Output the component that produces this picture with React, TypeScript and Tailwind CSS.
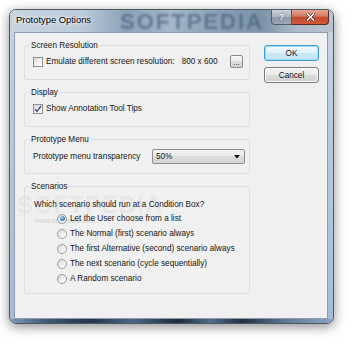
import React from "react";

function Checkbox({ checked }: { checked?: boolean }) {
  return (
    <div className="w-[10px] h-[10px] border border-[#8e8f8f] bg-[linear-gradient(135deg,#d6d6d6_0%,#f4f4f4_60%,#ffffff_100%)] flex items-center justify-center shrink-0">
      {checked && (
        <svg width="8" height="8" viewBox="0 0 8 8">
          <path d="M1 4.2 L3 6.4 L7 1" fill="none" stroke="#3a579a" strokeWidth="1.5" />
        </svg>
      )}
    </div>
  );
}

function Radio({ checked }: { checked?: boolean }) {
  return (
    <div className="w-[10px] h-[10px] rounded-full border border-[#9a9a9a] bg-[linear-gradient(135deg,#d8d8d8_0%,#f6f6f6_70%,#ffffff_100%)] flex items-center justify-center shrink-0">
      {checked && (
        <div className="w-[5px] h-[5px] rounded-full bg-[radial-gradient(circle_at_35%_35%,#a9d6f7_0%,#3b83c4_60%,#1c5a99_100%)]" />
      )}
    </div>
  );
}

function Group({
  title,
  className,
  children,
}: {
  title: string;
  className: string;
  children: React.ReactNode;
}) {
  return (
    <fieldset className={`w-[226px] border border-[#d5dfe5] rounded-[3px] ${className}`}>
      <legend className="ml-[5px] px-[1px] leading-[11px] text-[8.2px]">{title}</legend>
      {children}
    </fieldset>
  );
}

export default function App() {
  const radios = [
    "Let the User choose from a list",
    "The Normal (first) scenario always",
    "The first Alternative (second) scenario always",
    "The next scenario (cycle sequentially)",
    "A Random scenario",
  ];
  return (
    <div className="w-[350px] h-[341px] bg-white font-['Liberation_Sans',Arial,sans-serif] text-[#151515] pt-[9px] pl-[9px]">
      <div className="w-[325px] h-[315px] rounded-[7px] border border-[#4d5865] shadow-[0_3px_12px_rgba(0,0,0,0.45)] bg-[linear-gradient(180deg,#c8d5e2_0%,#b8cadb_40%,#a3bed8_100%)] flex flex-col overflow-hidden relative">
        {/* Title bar */}
        <div className="h-[22px] shrink-0 flex items-start relative bg-[linear-gradient(90deg,#c7d4e0_0%,#bccbd9_22%,#8ca2b7_36%,#a5b7c8_50%,#889eb3_66%,#7d93a8_78%,#a9b8c6_88%,#b8c5d1_100%)]">
          <div className="absolute left-[110px] top-[1px] text-[22px] leading-[22px] font-bold tracking-[2px] text-[#3e5a78] opacity-60 blur-[1px] pointer-events-none select-none">
            SOFTPEDIA
          </div>
          <div className="relative pl-[6px] pt-[4px] text-[9.4px] leading-[12px] text-black [text-shadow:0_0_5px_#ffffff,0_0_3px_#ffffff]">
            Prototype Options
          </div>
          <div className="ml-auto mr-[4px] flex relative">
            <div className="w-[21px] h-[15px] rounded-bl-[4px] border border-t-0 border-[#4f5b68] bg-[linear-gradient(180deg,#c9d3dc_0%,#a9b5c1_50%,#8c9aa8_50%,#9aa8b6_100%)] flex items-center justify-center text-white text-[9px] font-bold leading-none [text-shadow:0_0_2px_#333]">
              ?
            </div>
            <div className="w-[37px] h-[15px] rounded-br-[4px] border border-t-0 border-l-0 border-[#5a2a24] bg-[linear-gradient(180deg,#e8a493_0%,#d47a63_45%,#c24a2e_50%,#d05a3a_100%)] flex items-center justify-center">
              <svg width="9" height="8" viewBox="0 0 9 8">
                <path d="M1.5 1 L7.5 7 M7.5 1 L1.5 7" stroke="#3a1a14" strokeWidth="2.6" strokeLinecap="square" />
                <path d="M1.5 1 L7.5 7 M7.5 1 L1.5 7" stroke="#ffffff" strokeWidth="1.6" strokeLinecap="square" />
              </svg>
            </div>
          </div>
        </div>

        {/* Client area */}
        <div className="ml-[4px] mr-[5px] h-[287px] shrink-0 border border-[#8c9cad] bg-[#f0f0f0] flex relative text-[8.2px] leading-[11px]">
          <div className="absolute left-[2px] top-[160px] text-[24px] leading-[24px] font-bold tracking-[1px] text-[#e2e2e2] opacity-70 pointer-events-none select-none">
            SOFTPEDIA
          </div>
          <div className="absolute left-[20px] top-[184px] text-[7px] leading-[8px] text-[#d2d2d2] pointer-events-none select-none">
            www.softpedia.com
          </div>

          <div className="pl-[9px] pt-[7px] flex flex-col gap-[7px] relative">
            <Group title="Screen Resolution" className="h-[40px]">
              <div className="pl-[8px] pt-[4px] h-[17px] flex items-center">
                <Checkbox />
                <span className="ml-[3px]">Emulate different screen resolution:</span>
                <span className="ml-[7px]">800 x 600</span>
                <div className="ml-auto mr-[6px] w-[13px] h-[13px] rounded-[2px] border border-[#8a8a8a] bg-[linear-gradient(180deg,#f6f6f6_0%,#ececec_50%,#dedede_50%,#d2d2d2_100%)] flex items-end justify-center text-[8px] leading-[9px]">
                  ...
                </div>
              </div>
            </Group>
            <Group title="Display" className="h-[40px]">
              <div className="pl-[8px] pt-[4px] h-[17px] flex items-center">
                <Checkbox checked />
                <span className="ml-[3px]">Show Annotation Tool Tips</span>
              </div>
            </Group>
            <Group title="Prototype Menu" className="h-[40px]">
              <div className="pl-[8px] pt-[4px] h-[19px] flex items-center">
                <span>Prototype menu transparency</span>
                <div className="ml-auto mr-[4px] w-[93px] h-[15px] rounded-[2px] border border-[#8f8f8f] bg-[linear-gradient(180deg,#f4f4f4_0%,#ebebeb_50%,#dddddd_50%,#d4d4d4_100%)] flex items-center pl-[3px] pr-[4px]">
                  <span>50%</span>
                  <svg className="ml-auto" width="6" height="4" viewBox="0 0 6 4">
                    <path d="M0 0 L6 0 L3 3.5 Z" fill="#111" />
                  </svg>
                </div>
              </div>
            </Group>
            <Group title="Scenarios" className="h-[113px]">
              <div className="pl-[9px] pt-[6px] h-[19px] flex items-center">
                Which scenario should run at a Condition Box?
              </div>
              <div className="flex flex-col pl-[32px]">
                {radios.map((r, i) => (
                  <div key={r} className="h-[15px] flex items-center gap-[3px]">
                    <Radio checked={i === 0} />
                    <span>{r}</span>
                  </div>
                ))}
              </div>
            </Group>
          </div>

          <div className="ml-[14px] pt-[12px] flex flex-col gap-[6px]">
            <div className="w-[55px] h-[16px] rounded-[3px] border border-[#3c9ad6] shadow-[inset_0_0_0_1px_#9fe0fb] bg-[linear-gradient(180deg,#eef8fd_0%,#e1f2fb_50%,#cdeaf9_50%,#bfe3f7_100%)] flex items-center justify-center">
              OK
            </div>
            <div className="w-[55px] h-[16px] rounded-[3px] border border-[#7a7a7a] shadow-[inset_0_0_0_1px_#fbfbfb] bg-[linear-gradient(180deg,#f4f4f4_0%,#ebebeb_50%,#dddddd_50%,#cfcfcf_100%)] flex items-center justify-center">
              Cancel
            </div>
          </div>
        </div>

        {/* Bottom frame */}
        <div className="h-[4px] shrink-0 bg-[linear-gradient(90deg,#7d9bb8_0%,#3e5670_12%,#22344a_25%,#4c6884_38%,#1b2a3a_52%,#536f8b_62%,#1f2f40_72%,#5d7893_85%,#8aa6c0_100%)]" />
      </div>
    </div>
  );
}
